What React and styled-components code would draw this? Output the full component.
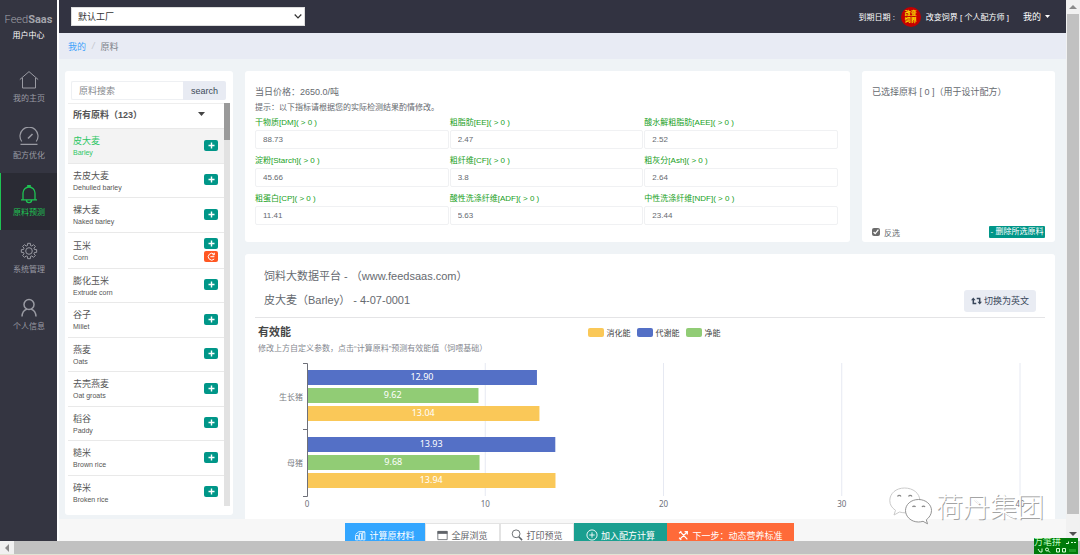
import React from 'react';
import styled, { createGlobalStyle, css } from 'styled-components';

const sans = '"Liberation Sans", "Noto Sans CJK SC", sans-serif';
const uiSans = '"Noto Sans", "Noto Sans CJK SC", sans-serif';

const Global = createGlobalStyle`
  *, *::before, *::after { box-sizing: border-box; }
  body { margin: 0; overflow: hidden; font-family: ${sans}; font-size: 9px; color: #666a70; background: #fff; }
  button, input, select { font: inherit; color: inherit; margin: 0; }
  button { cursor: pointer; border: 0; padding: 0; background: none; }
  a { color: inherit; text-decoration: none; }
  ul, ol { margin: 0; padding: 0; list-style: none; }
  h1, h2, p { margin: 0; font-weight: 400; }
  svg { display: block; flex: none; }
`;

const Shell = styled.div`
  position: relative;
  height: 100vh;
  display: grid;
  grid-template-columns: 57px minmax(0, 1fr) 14px;
  grid-template-rows: minmax(0, 1fr) 13px;
  border-bottom: 1px solid #e2e4d4;
`;

/* ---------- side navigation ---------- */
const Side = styled.aside`
  background: #343541;
  color: #9a9ba3;
  text-align: center;
`;
const Brand = styled.div`
  height: 59px;
  padding-top: 12px;
  color: #fff;
  font-size: 8px;
  line-height: 16px;
`;
const Logo = styled.div`
  font: 300 11px/16px Roboto, sans-serif;
  color: #a3a4ab;
  b { font-weight: 700; }
`;
const NavLink = styled.a`
  display: flex;
  flex-direction: column;
  align-items: center;
  gap: 3px;
  height: 57px;
  padding-top: 11px;
  font-size: 8px;
  line-height: 12px;
  border-left: 1px solid transparent;
  ${(p) => p.$active && css`
    color: #1fc353;
    background: #2a2b34;
    border-left-color: #1fc353;
  `}
`;

/* ---------- workspace ---------- */
const Work = styled.div`
  display: flex;
  flex-direction: column;
  min-width: 0;
  min-height: 0;
  border-left: 2px solid #fff;
  background: #eff3f6;
`;
const TopBar = styled.header`
  flex: none;
  display: flex;
  align-items: center;
  height: 33px;
  padding: 0 16px 0 12px;
  background: #323341;
  color: #fff;
  font-size: 8px;
`;
const SelectWrap = styled.div`
  position: relative;
  width: 234px;
  margin-right: auto;
  color: #333;
  svg { position: absolute; right: 3px; top: 6px; pointer-events: none; }
`;
const FactorySelect = styled.select`
  display: block;
  width: 100%;
  height: 19px;
  padding: 0 6px;
  appearance: none;
  border: 1px solid #ddd;
  border-radius: 0;
  background: #fff;
  font-size: 9px;
`;
const Avatar = styled.span`
  display: grid;
  place-content: center;
  width: 20px;
  height: 20px;
  margin: 0 5px 0 6px;
  border-radius: 50%;
  background: #c40000;
  color: #ffe600;
  font-size: 6px;
  font-weight: 700;
  line-height: 7px;
`;
const MineButton = styled.button`
  display: flex;
  align-items: center;
  gap: 4px;
  margin-left: 14px;
  font-size: 9px;
`;
const Crumbs = styled.nav`
  flex: none;
  display: flex;
  align-items: center;
  gap: 6px;
  height: 26px;
  padding: 0 9px;
  background: #e8ebf4;
  color: #7b7f86;
  a { color: #3fa2fb; }
  i { color: #c3c6cd; }
`;
const Content = styled.main`
  flex: 1;
  min-height: 0;
  display: grid;
  grid-template-columns: 168px minmax(0, 1fr);
  gap: 12px;
  padding: 12px 11px 0 6px;
  overflow: hidden;
`;
const Card = styled.section`
  background: #fff;
  border-radius: 3px;
  min-width: 0;
`;

/* ---------- ingredient list ---------- */
const ListCard = styled(Card)`
  display: flex;
  flex-direction: column;
  min-height: 0;
  margin-bottom: 4px;
  padding: 10px 3px 9px;
`;
const SearchBar = styled.form`
  flex: none;
  display: flex;
  height: 19px;
  margin: 0 4px 3px 3px;
`;
const SearchInput = styled.input`
  flex: 1;
  min-width: 0;
  padding: 0 7px;
  border: 1px solid #eef0f3;
  border-right: 0;
  border-radius: 2px 0 0 2px;
  &::placeholder { color: #85888d; opacity: 1; }
`;
const SearchButton = styled.button`
  width: 43px;
  border-radius: 0 2px 2px 0;
  background: #e8ebf3;
  color: #3c4a58;
`;
const ListScroll = styled.div`
  flex: 1;
  min-height: 0;
  display: grid;
  grid-template-columns: minmax(0, 1fr) 6px;
  overflow: hidden;
`;
const ListTrack = styled.div`
  background: #e2e2e2;
  &::before { content: ""; display: block; height: 37px; background: #9a9a9a; }
`;
const ListBody = styled.div`
  min-height: 0;
  overflow: hidden;
`;
const GroupButton = styled.button`
  display: flex;
  align-items: center;
  justify-content: space-between;
  width: 100%;
  height: 25px;
  padding: 0 19px 4px 5px;
  border-top: 1px solid #eee;
  color: #555;
  font-weight: 700;
`;
const Items = styled.ul`
  display: flex;
  flex-direction: column;
  height: 381px;
`;
const Item = styled.li`
  flex: ${(p) => (p.$tall ? '0 0 36px' : '1 1 0')};
  display: flex;
  align-items: center;
  justify-content: space-between;
  padding: 0 6px 0 5px;
  border-top: 1px solid #e9e9e9;
  color: #555;
  ${(p) => p.$active && css`
    background: #f3f3f3;
    color: #2ec766;
  `}
`;
const ItemText = styled.div`
  display: grid;
  grid-template-rows: 13px 10px;
  padding-top: 2px;
  line-height: 13px;
  small { font-size: 7px; line-height: 10px; }
`;
const ItemActions = styled.div`
  display: grid;
  gap: 2px;
  padding-bottom: 1px;
`;
const MiniButton = styled.button`
  display: grid;
  place-items: center;
  width: 14px;
  height: 11px;
  border-radius: 2px;
  background: ${(p) => (p.$hot ? '#ff5722' : '#009688')};
  color: #fff;
`;

/* ---------- right-hand column ---------- */
const Main = styled.div`
  display: flex;
  flex-direction: column;
  gap: 12px;
  min-width: 0;
  min-height: 0;
`;
const TopCards = styled.div`
  flex: none;
  display: grid;
  grid-template-columns: minmax(0, 605fr) minmax(0, 193fr);
  gap: 12px;
`;
const ParamCard = styled(Card)`
  padding: 14px 12px 17px 10px;
`;
const Price = styled.p`
  line-height: 15px;
`;
const Hint = styled.p`
  font-size: 8px;
  line-height: 15px;
`;
const Fields = styled.div`
  display: grid;
  grid-template-columns: repeat(3, minmax(0, 1fr));
  gap: 4px 1px;
`;
const Field = styled.label`
  display: block;
  color: #17a01b;
  font-size: 8px;
  line-height: 15px;
`;
const FieldInput = styled.input`
  display: block;
  width: 100%;
  height: 19px;
  padding: 0 7px;
  border: 1px solid #f0f1f3;
  border-radius: 2px;
  color: #666a70;
`;
const PickCard = styled(Card)`
  display: flex;
  flex-direction: column;
  justify-content: space-between;
  padding: 14px 10px 4px;
`;
const PickTitle = styled.p`
  line-height: 15px;
  white-space: nowrap;
`;
const PickFoot = styled.div`
  display: flex;
  align-items: center;
  justify-content: space-between;
  font-size: 8px;
`;
const Check = styled.label`
  display: flex;
  align-items: center;
  gap: 4px;
  input { width: 8px; height: 8px; accent-color: #6b6b6b; }
`;
const RemoveButton = styled.button`
  height: 12px;
  width: 56px;
  white-space: nowrap;
  background: #009688;
  border-radius: 1px;
  color: #fff;
  font-size: 8px;
  line-height: 12px;
`;

/* ---------- report ---------- */
const Report = styled(Card)`
  flex: 1;
  min-height: 0;
  padding: 10px 10px 0;
  border-radius: 3px 3px 0 0;
`;
const ReportHead = styled.div`
  display: flex;
  align-items: flex-end;
  justify-content: space-between;
  padding: 0 9px 5px;
  border-bottom: 1px solid #e4e4e6;
  font-size: 11px;
  line-height: 24px;
  h1 { font-size: 11px; }
`;
const LangButton = styled.button`
  display: flex;
  align-items: center;
  justify-content: center;
  gap: 2px;
  width: 72px;
  height: 22px;
  border-radius: 3px;
  background: #e9ecf3;
  color: #38465a;
  font-size: 9px;
`;
const ChartHead = styled.div`
  display: grid;
  grid-template-columns: minmax(0, 1fr) auto minmax(0, 1fr);
  padding: 5px 0 0 3px;
  h2 { font: 700 11px/18px ${uiSans}; color: #464646; }
`;
const Legend = styled.ul`
  display: flex;
  gap: 6px;
  align-items: center;
  padding-left: 5px;
  font-size: 8px;
  color: #444;
  li { display: flex; align-items: center; gap: 3px; }
`;
const Swatch = styled.span`
  width: 16px;
  height: 9px;
  border-radius: 2px;
  background: ${(p) => p.$color};
`;
const ChartNote = styled.p`
  padding-left: 3px;
  font-size: 8px;
  line-height: 15px;
  color: #85888f;
`;
const ChartBody = styled.div`
  display: grid;
  grid-template-columns: 48px minmax(0, 1fr);
  gap: 4px;
  padding: 7px 25px 0 0;
  font-family: ${uiSans};
`;
const Categories = styled.div`
  display: grid;
  grid-template-rows: 66px 66px;
  align-items: center;
  justify-items: end;
  font-size: 8px;
  color: #7b7e85;
`;

/* ---------- bottom actions ---------- */
const ActionBar = styled.footer`
  flex: none;
  display: flex;
  justify-content: center;
  height: 22px;
  padding: 4px 0 0 14px;
  overflow: hidden;
  background: #f7f7f7;
`;
const tones = {
  blue: ['#33a6ff', '#fff'],
  plain: ['#fff', '#5f6368'],
  teal: ['#1a9f90', '#fff'],
  orange: ['#ff6a39', '#fff'],
};
const ActionButton = styled.button`
  flex: none;
  display: flex;
  align-items: center;
  justify-content: center;
  gap: 3px;
  height: 24px;
  width: ${(p) => p.$w}px;
  background: ${(p) => tones[p.$tone][0]};
  color: ${(p) => tones[p.$tone][1]};
  border: 1px solid ${(p) => (p.$tone === 'plain' ? '#e3e3e3' : tones[p.$tone][0])};
`;

/* ---------- window scroll bars ---------- */
const VBar = styled.div`
  display: flex;
  flex-direction: column;
  align-items: center;
  justify-content: space-between;
  padding: 5px 0;
  background: #f1f1f1;
`;
const VThumb = styled.div`
  flex: 1;
  align-self: stretch;
  margin: 5px 1px 18px 1px;
  background: #c1c1c1;
`;
const HBar = styled.div`
  grid-column: 1 / -1;
  display: flex;
  align-items: center;
  gap: 5px;
  padding-left: 5px;
  background: #f1f1f1;
  &::after { content: ""; flex: 1; height: 13px; background: #c1c1c1; }
`;

/* ---------- overlays ---------- */
const Watermark = styled.div`
  position: absolute;
  right: 36px;
  bottom: 29px;
  display: flex;
  align-items: center;
  gap: 4px;
  color: #fff;
  font: 300 27px/38px "Noto Sans CJK SC", sans-serif;
  text-shadow: 1px 1px 0 #a4a4a4;
  pointer-events: none;
`;
const Ime = styled.div`
  position: absolute;
  right: 2px;
  bottom: 0;
  width: 44px;
  height: 16px;
  overflow: hidden;
  background: #007a0a;
  color: #c4ffc4;
  font-size: 9px;
  line-height: 9px;
  svg { position: absolute; inset: 0; }
`;

const Line = ({ size = 20, sw = 1, children }) => (
  <svg width={size} height={size} viewBox="0 0 20 20" fill="none" stroke="currentColor" strokeWidth={sw} aria-hidden="true">
    {children}
  </svg>
);

const gear = Array.from({ length: 8 }, (_, i) => {
  const pt = (r, deg) => {
    const a = ((deg + i * 45) * Math.PI) / 180;
    return `${(10 + r * Math.cos(a)).toFixed(2)} ${(10 + r * Math.sin(a)).toFixed(2)}`;
  };
  return `${i ? 'L' : 'M'}${pt(5.7, -15)}L${pt(7.8, -10)}L${pt(7.8, 10)}L${pt(5.7, 15)}`;
}).join('') + 'Z';

const nav = [
  ['我的主页', <Line><path d="M.8 9.6 10 1.6l9.2 8M3.5 8v10h13V8" /></Line>],
  ['配方优化', <Line sw={1.2}><path d="M2.800 14.500A9 9 0 1 1 17.200 14.500M1.500 17.400h17" /><path d="m9 11.500 4.500-4.500" strokeWidth="1.600" /></Line>],
  ['原料预测', <Line sw={1.3}><path d="M2 15.8h16M4 15.8V9a6 6 0 0 1 12 0v6.8M8.8 3V1.6h2.4V3M7.4 16a2.6 2.6 0 0 0 5.2 0" /></Line>],
  ['系统管理', <Line><path d={gear} strokeLinejoin="round" /><circle cx="10" cy="10" r="3.3" /></Line>],
  ['个人信息', <Line sw={1.5}><circle cx="10" cy="6.5" r="5" /><path d="M3 18.500c.2-4 2-6.500 5-7.400M17 18.500c-.2-4-2-6.500-5-7.400" /></Line>],
];

const items = [
  ['皮大麦', 'Barley'], ['去皮大麦', 'Dehulled barley'], ['裸大麦', 'Naked barley'], ['玉米', 'Corn'],
  ['膨化玉米', 'Extrude corn'], ['谷子', 'Millet'], ['燕麦', 'Oats'], ['去壳燕麦', 'Oat groats'],
  ['稻谷', 'Paddy'], ['糙米', 'Brown rice'], ['碎米', 'Broken rice'],
];

const fields = [
  ['干物质[DM]( > 0 )', '88.73'], ['粗脂肪[EE]( > 0 )', '2.47'], ['酸水解粗脂肪[AEE]( > 0 )', '2.52'],
  ['淀粉[Starch]( > 0 )', '45.66'], ['粗纤维[CF]( > 0 )', '3.8'], ['粗灰分[Ash]( > 0 )', '2.64'],
  ['粗蛋白[CP]( > 0 )', '11.41'], ['酸性洗涤纤维[ADF]( > 0 )', '5.63'], ['中性洗涤纤维[NDF]( > 0 )', '23.44'],
];

const YELLOW = '#fac858';
const BLUE = '#5470c6';
const GREEN = '#91cc75';
const legend = [['消化能', YELLOW], ['代谢能', BLUE], ['净能', GREEN]];
const groups = [
  [['12.90', BLUE], ['9.62', GREEN], ['13.04', YELLOW]],
  [['13.93', BLUE], ['9.68', GREEN], ['13.94', YELLOW]],
];
const AXIS_MAX = 40;

function EnergyChart() {
  return (
    <svg width="100%" height="152" overflow="visible" fontFamily='"Noto Sans", sans-serif' role="img" aria-label="有效能">
      {[10, 20, 30, 40].map((t) => (
        <line key={t} x1={`${(t / AXIS_MAX) * 100}%`} x2={`${(t / AXIS_MAX) * 100}%`} y1="0" y2="133" stroke="#e6e9f2" />
      ))}
      {groups.map((bars, g) =>
        bars.map(([value, color], i) => {
          const pct = (Number(value) / AXIS_MAX) * 100;
          const y = 7 + g * 67 + i * 18;
          return (
            <g key={value}>
              <rect x="0" y={y} width={`${pct}%`} height="15" fill={color} />
              <text x={`${pct / 2}%`} y={y + 10} fontSize="9" fill="#fff" textAnchor="middle">{value}</text>
            </g>
          );
        })
      )}
      <path d="M-4 .5H.5V133.5H-4M-4 66.5H0" fill="none" stroke="#6e7079" />
      {[0, 10, 20, 30, 40].map((t) => (
        <text key={t} x={`${(t / AXIS_MAX) * 100}%`} y="144" fontSize="8" fill="#6e7079" textAnchor="middle">{t}</text>
      ))}
    </svg>
  );
}

const Plus = () => (
  <svg width="7" height="7" viewBox="0 0 7 7" stroke="currentColor" strokeWidth="1.400" aria-hidden="true"><path d="M3.500 .5v6M.5 3.500h6" /></svg>
);

const Arrow = ({ d, fill = '#8b8b8b', w = 8, h = 4 }) => (
  <svg width={w} height={h} viewBox={`0 0 ${w} ${h}`} fill={fill} aria-hidden="true"><path d={d} /></svg>
);

export default function App() {
  return (
    <Shell>
      <Global />
      <Side>
        <Brand>
          <Logo>Feed<b>Saas</b></Logo>
          用户中心
        </Brand>
        <nav>
          {nav.map(([label, icon], i) => (
            <NavLink href="#" key={label} $active={i === 2}>{icon}{label}</NavLink>
          ))}
        </nav>
      </Side>

      <Work>
        <TopBar>
          <SelectWrap>
            <FactorySelect aria-label="工厂"><option>默认工厂</option></FactorySelect>
            <svg width="8" height="7" viewBox="0 0 8 7" fill="none" stroke="#333" strokeWidth="1.2" aria-hidden="true"><path d="m.7 1.5 3.3 3.5 3.3-3.5" /></svg>
          </SelectWrap>
          <span>到期日期 :</span>
          <Avatar><span>改变</span><span>饲界</span></Avatar>
          <span>改变饲界 [ 个人配方师 ]</span>
          <MineButton>我的<Arrow w={5} h={3} fill="#fff" d="M0 0h5L2.5 3z" /></MineButton>
        </TopBar>
        <Crumbs><a href="#">我的</a><i>/</i><span>原料</span></Crumbs>

        <Content>
          <ListCard>
            <SearchBar onSubmit={(e) => e.preventDefault()}>
              <SearchInput aria-label="原料搜索" placeholder="原料搜索" />
              <SearchButton>search</SearchButton>
            </SearchBar>
            <ListScroll>
              <ListBody>
                <GroupButton>所有原料（123）<Arrow w={7} h={4} fill="#444" d="M0 0h7L3.5 4z" /></GroupButton>
                <Items>
                  {items.map(([zh, en], i) => (
                    <Item key={en} $active={i === 0} $tall={i === 3}>
                      <ItemText>{zh}<small>{en}</small></ItemText>
                      <ItemActions>
                        <MiniButton aria-label={`添加 ${zh}`}><Plus /></MiniButton>
                        {i === 3 && (
                          <MiniButton $hot aria-label={`刷新 ${zh}`}>
                            <svg width="9" height="9" viewBox="0 0 9 9" fill="none" stroke="currentColor" aria-hidden="true">
                              <path d="M7.2 2.4A3.4 3.4 0 1 0 7.2 7M3.4 4.7h4M7.3.8v2H5.4" />
                            </svg>
                          </MiniButton>
                        )}
                      </ItemActions>
                    </Item>
                  ))}
                </Items>
              </ListBody>
              <ListTrack />
            </ListScroll>
          </ListCard>

          <Main>
            <TopCards>
              <ParamCard>
                <Price>当日价格：2650.0/吨</Price>
                <Hint>提示：以下指标请根据您的实际检测结果酌情修改。</Hint>
                <Fields>
                  {fields.map(([label, value]) => (
                    <Field key={label}>{label}<FieldInput defaultValue={value} /></Field>
                  ))}
                </Fields>
              </ParamCard>
              <PickCard>
                <PickTitle>已选择原料 [ 0 ]（用于设计配方）</PickTitle>
                <PickFoot>
                  <Check><input type="checkbox" defaultChecked />反选</Check>
                  <RemoveButton>- 删除所选原料</RemoveButton>
                </PickFoot>
              </PickCard>
            </TopCards>

            <Report>
              <ReportHead>
                <div>
                  <h1>饲料大数据平台 - （www.feedsaas.com）</h1>
                  <p>皮大麦（Barley） - 4-07-0001</p>
                </div>
                <LangButton>
                  <svg width="11" height="8" viewBox="0 0 11 8" fill="none" stroke="currentColor" strokeWidth="1.5" aria-hidden="true">
                    <path d="M2.3 2.5v4h3M5.700 1.500h3v4" />
                    <path d="M0 3.200 2.300.4l2.300 2.800zM6.400 4.800h4.600L8.700 7.600z" fill="currentColor" stroke="none" />
                  </svg>
                  切换为英文
                </LangButton>
              </ReportHead>
              <ChartHead>
                <h2>有效能</h2>
                <Legend>
                  {legend.map(([name, color]) => <li key={name}><Swatch $color={color} />{name}</li>)}
                </Legend>
              </ChartHead>
              <ChartNote>修改上方自定义参数，点击“计算原料”预测有效能值（饲喂基础）</ChartNote>
              <ChartBody>
                <Categories><span>生长猪</span><span>母猪</span></Categories>
                <EnergyChart />
              </ChartBody>
            </Report>
          </Main>
        </Content>

        <ActionBar>
          <ActionButton $w={80} $tone="blue">
            <Line size={11} sw={1.5}><path d="M1 10h5v8H1zM8 6h4v12H8zM14 4h4v14h-4zM1 8l6-5h11" /></Line>计算原材料
          </ActionButton>
          <ActionButton $w={75} $tone="plain">
            <Line size={11} sw={1.5}><path d="M1.5 2.5h17v15h-17z" /><path d="M1 4.5h18" strokeWidth="5" /></Line>全屏浏览
          </ActionButton>
          <ActionButton $w={74} $tone="plain">
            <Line size={12} sw={1.5}><circle cx="8.5" cy="8" r="6.5" /><path d="m13 13 5.5 5.5" strokeWidth="2.5" /></Line>打印预览
          </ActionButton>
          <ActionButton $w={93} $tone="teal">
            <Line size={12} sw={1.5}><circle cx="10" cy="10" r="8.5" /><path d="M10 5.5v9M5.5 10h9" /></Line>加入配方计算
          </ActionButton>
          <ActionButton $w={127} $tone="orange">
            <Line size={11} sw={2.2}><path d="m3 17 13-13M4 3l13 14M12 3h5v5M2 6l4-4M2 14l4 4" /></Line>下一步：动态营养标准
          </ActionButton>
        </ActionBar>
      </Work>

      <VBar>
        <Arrow d="M0 4h8L4 0z" />
        <VThumb />
        <Arrow fill="#505050" d="M0 0h8L4 4z" />
      </VBar>
      <HBar><Arrow w={4} h={8} d="M4 0v8L0 4z" /></HBar>

      <Watermark>
        <svg width="43" height="38" viewBox="0 0 43 38" aria-hidden="true">
          <g fill="#fff" strokeWidth=".9">
            <path d="M15.5 1C7 1 .8 6.5.8 13.5c0 4.2 2 7.3 5.7 9.800L5 28l5.500-3c2 .5 3.500.8 5.500.8 8 0 14.800-5 14.800-12.300S24 1 15.500 1Z" stroke="#c4c4c4" />
            <path d="M29.500 12.500c-7.500 0-13 5-13 11s5.500 11.500 13 11.500c1.500 0 3-.3 4.500-.7l4.500 2.500-1.200-4c3-2.200 5.200-5.500 5.200-9.300 0-6-5.700-11-13-11Z" stroke="#888" />
          </g>
          <g fill="none" stroke="#888" strokeWidth="1.2">
            <path d="M8.500 9.500a2 2 0 0 1 3.500 0M19.500 9.500a2 2 0 0 1 3.500 0M23.500 20a1.700 1.700 0 0 1 3 0M33 20a1.700 1.700 0 0 1 3 0" />
          </g>
        </svg>
        荷丹集团
      </Watermark>
      <Ime>
        万笔拼
        <svg width="44" height="16" viewBox="0 0 44 16" fill="none" stroke="#d8ffd8" aria-hidden="true">
          <path d="M32 5.5h2.5v-2M37 4.5h2M40 4.5h2M4 11l2 3h2v-3.5M22.5 10.5h3v3.5h-3zM28.5 10.5h3v3.5h-3z" />
          <circle cx="13" cy="11.5" r="1.5" /><path d="m14 12.5 2 2" />
          <path d="M35 12.5h7" stroke="#1d9a26" strokeWidth="3" />
        </svg>
      </Ime>
    </Shell>
  );
}
